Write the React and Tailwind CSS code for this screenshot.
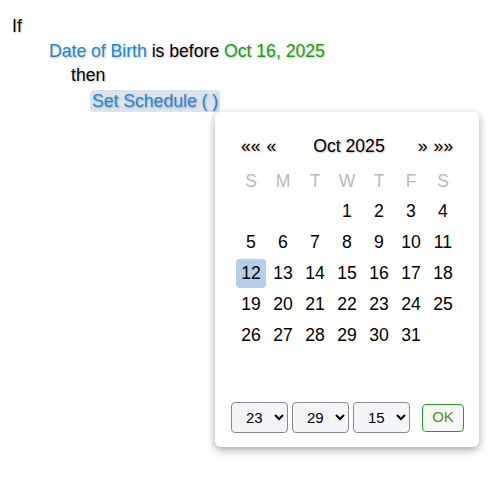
import React, { useState } from 'react';

const WEEKDAYS = ['S', 'M', 'T', 'W', 'T', 'F', 'S'];

// Oct 2025 starts on a Wednesday
const buildWeeks = () => {
  const cells = [null, null, null];
  for (let d = 1; d <= 31; d++) cells.push(d);
  while (cells.length < 42) cells.push(null);
  const weeks = [];
  for (let i = 0; i < 42; i += 7) weeks.push(cells.slice(i, i + 7));
  return weeks;
};

const shadow = '[text-shadow:1px_1px_2px_rgba(0,0,0,0.25)]';

const TimeSelect = ({ value, options }) => (
  <select
    defaultValue={value}
    className="shrink-0 w-[57px] h-[31px] border border-[#8a8a8a] rounded-[4px] bg-[#f3f5f9] text-[15px] pl-[10px] text-black"
  >
    {options.map((o) => (
      <option key={o} value={o}>{o}</option>
    ))}
  </select>
);

const App = () => {
  const [selected, setSelected] = useState(12);
  const weeks = buildWeeks();
  const hours = Array.from({ length: 24 }, (_, i) => String(i));
  const mins = Array.from({ length: 60 }, (_, i) => String(i));

  return (
    <div className="relative w-[491px] h-[504px] bg-white text-[17.6px] text-black font-['Liberation_Sans',Arial,sans-serif]">
      <div className={`pt-[14px] pl-[12px] leading-[24.5px] ${shadow}`}>
        <div>If</div>
        <div className="pl-[37px]">
          <span className="text-[#1a88e0]">Date of Birth</span> is before{' '}
          <span className="text-[#16a010]">Oct 16, 2025</span>
        </div>
        <div className="pl-[59px]">then</div>
        <div className="pl-[78px] pt-[1px]">
          <span className="bg-[#dde3ea] text-[#1a88e0] rounded-[3px] px-[2px] py-[1px]">Set Schedule ( )</span>
        </div>
      </div>

      {/* date picker popup */}
      <div className="absolute left-[215px] top-[112px] w-[264px] h-[335px] bg-white rounded-[6px] shadow-[0_3px_8px_rgba(0,0,0,0.35)] px-[20px] pt-[22px]">
        <div className={`flex items-center justify-between h-[24px] px-[6px] ${shadow}`}>
          <div className="flex gap-[6px] w-[44px]">
            <span>««</span>
            <span>«</span>
          </div>
          <span className="pl-[4px]">Oct 2025</span>
          <div className="flex gap-[6px] w-[44px] justify-end">
            <span>»</span>
            <span>»»</span>
          </div>
        </div>

        <div className="grid grid-cols-7 mt-[10px] text-[#bbbbbb] h-[24px] items-center">
          {WEEKDAYS.map((w, i) => (
            <div key={i} className="text-center">{w}</div>
          ))}
        </div>

        <div className={`mt-[4px] ${shadow}`}>
          {weeks.map((week, wi) => (
            <div key={wi} className="grid grid-cols-7 h-[31px]">
              {week.map((d, di) => (
                <div key={di} className="flex items-center justify-center">
                  {d && (
                    <button
                      onClick={() => setSelected(d)}
                      className={`w-[30px] h-[29px] rounded-[4px] flex items-center justify-center ${d === selected ? 'bg-[#b6cfe8]' : ''}`}
                    >
                      {d}
                    </button>
                  )}
                </div>
              ))}
            </div>
          ))}
        </div>

        <div className="flex items-center mt-[20px] -ml-[4px] w-[240px]">
          <div className="flex gap-[4px] shrink-0">
            <TimeSelect value="23" options={hours} />
            <TimeSelect value="29" options={mins} />
            <TimeSelect value="15" options={mins} />
          </div>
          <button className="shrink-0 ml-[12px] w-[42px] h-[28px] border border-[#2a9a2a] rounded-[4px] text-[15px] text-[#5a9010] bg-[#f6f8f5]">
            OK
          </button>
        </div>
      </div>
    </div>
  );
};

export default App;
